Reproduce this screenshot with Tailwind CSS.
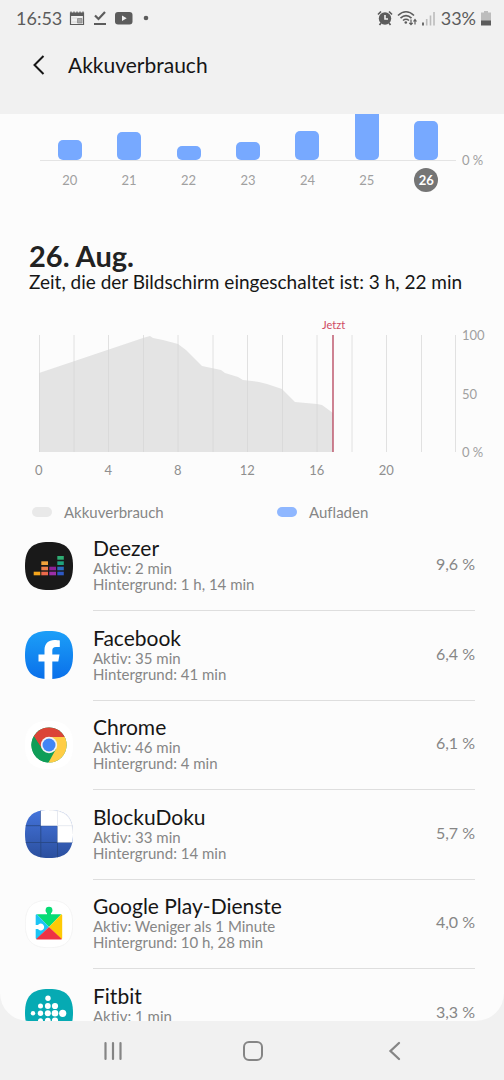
<!DOCTYPE html>
<html lang="de">
<head>
    <meta charset="UTF-8">
    <meta name="viewport" content="width=device-width, initial-scale=1.0">
    <title>Akkuverbrauch</title>
    <script src="https://cdn.jsdelivr.net/npm/@tailwindcss/browser@4"></script>
</head>
<body class="flex h-screen flex-col overflow-hidden bg-[#f1f1f1] font-[Lato,sans-serif] text-[#161616] [font-variant-ligatures:none]">

    <!-- Status bar -->
    <div class="flex h-9 shrink-0 items-center justify-between pr-3 pl-4 text-[18px] text-[#5c5c5c]">
        <div class="flex items-center gap-[7px]">
            <span>16:53</span>
            <svg class="h-4 w-4" viewBox="0 0 16 16" fill="none" stroke="#5c5c5c">
                <path d="M1.500 3h13v11.500h-13z" stroke-width="1.200"/>
                <path d="M1 4.500h14" stroke-width="3"/>
                <path d="M2 1.500v2M5 1.500v2M8 1.500v2M11 1.500v2M14 1.500v2" stroke-width="1.200"/>
                <path d="M3 8h5M3 12h5" stroke="#d8d8d8"/>
                <path d="M8.500 8.500h4.500v4.500h-4.500z" fill="#a8a8a8" stroke="#8a8a8a" stroke-width=".8"/>
            </svg>
            <svg class="h-4 w-4" viewBox="0 0 16 16" fill="none" stroke="#5c5c5c" stroke-width="2.200">
                <path d="M3 5.500l3.500 3.500L13 2M2 14h12"/>
            </svg>
            <svg class="h-4 w-[18px]" viewBox="0 0 18 16">
                <rect y="2" width="17.500" height="12.500" rx="3" fill="#5c5c5c"/>
                <path d="M7 5.500v5.500l4.700-2.750z" fill="#f1f1f1"/>
            </svg>
            <svg class="h-4 w-4" viewBox="0 0 16 16"><circle cx="6" cy="8" r="2.300" fill="#5c5c5c"/></svg>
        </div>
        <div class="flex items-center gap-1">
            <svg class="h-4 w-4" viewBox="0 0 16 16" fill="none" stroke="#5c5c5c" stroke-width="1.700">
                <circle cx="8" cy="8.500" r="6.200" fill="#5c5c5c" stroke="none"/>
                <path d="M1 4.500l3-3M15 4.500l-3-3M4 13l-1.500 2M12 13l1.500 2"/>
                <path d="M8 5v4h3" stroke="#f1f1f1" stroke-width="1.600"/>
            </svg>
            <svg class="h-4 w-5" viewBox="0 0 20 16" fill="none" stroke="#5c5c5c" stroke-width="1.600">
                <path d="M1 5.500Q9 -2 17 5.500M3.500 8.200Q9 3 14.500 8.200M6 10.500Q9 8 12 10.500"/>
                <circle cx="8.800" cy="12.500" r="1.300" fill="#5c5c5c" stroke="none"/>
                <path d="M14 9.500v5M12.300 12.800L14 14.700l1.700-1.900M18 14.500V9.800M16.500 11.500L18 9.500l1.500 2" stroke-width="1.200"/>
            </svg>
            <svg class="h-4 w-4" viewBox="0 0 16 16" stroke-width="1.600">
                <path d="M2 12.500v3" stroke="#4c4c4c"/>
                <path d="M5.700 9v6.500M9.500 5.500v10M13 2v13.500" stroke="#bcbcbc"/>
            </svg>
            <span>33%</span>
            <svg class="h-4 w-3" viewBox="0 0 12 16">
                <path d="M4 1h4v1.500h3V11H1V2.500h3z" fill="#bdbdbd"/>
                <path d="M1 10.500h10V15.500H1z" fill="#5c5c5c"/>
            </svg>
        </div>
    </div>

    <!-- App bar -->
    <header class="flex h-[78px] shrink-0 items-start gap-4 pt-[14px] pl-6">
        <button type="button" aria-label="Zurück" class="flex h-[30px] w-7 items-center justify-center">
            <svg class="h-5 w-4" viewBox="0 0 16 20" fill="none" stroke="#161616" stroke-width="2"><path d="M13.500 1L4.500 10l9 9"/></svg>
        </button>
        <h1 class="text-[21px] leading-[30px]">Akkuverbrauch</h1>
    </header>

    <main class="min-h-0 flex-1 overflow-hidden rounded-b-[28px] bg-[#fcfcfc]">

        <!-- Daily usage -->
        <section class="flex pl-10 text-[13px] text-[#a0a0a0]">
            <div class="flex-1">
                <div class="grid h-[47px] grid-cols-7 grid-rows-1 items-end justify-items-center overflow-hidden border-b border-[#e4e4e4]">
                    <div class="h-5 w-6 rounded-[5px] bg-[#77a9ff]"></div>
                    <div class="h-7 w-6 rounded-[5px] bg-[#77a9ff]"></div>
                    <div class="h-[14px] w-6 rounded-[5px] bg-[#77a9ff]"></div>
                    <div class="h-[18px] w-6 rounded-[5px] bg-[#77a9ff]"></div>
                    <div class="h-[29px] w-6 rounded-[5px] bg-[#77a9ff]"></div>
                    <div class="h-[60px] w-6 rounded-[5px] bg-[#77a9ff]"></div>
                    <div class="h-[39px] w-6 rounded-[5px] bg-[#77a9ff]"></div>
                </div>
                <div class="mt-[7px] grid grid-cols-7 justify-items-center leading-6">
                    <button type="button">20</button>
                    <button type="button">21</button>
                    <button type="button">22</button>
                    <button type="button">23</button>
                    <button type="button">24</button>
                    <button type="button">25</button>
                    <button type="button" class="h-6 w-6 rounded-full bg-[#757575] font-bold text-white">26</button>
                </div>
            </div>
            <span class="mt-[38px] w-12 pl-[6px] leading-4">0 %</span>
        </section>

        <section class="mt-12 pl-[29px]">
            <h2 class="text-[29px] leading-8 font-bold text-[#222]">26. Aug.</h2>
            <p class="text-[19px] leading-5 whitespace-nowrap">Zeit, die der Bildschirm eingeschaltet ist: 3 h, 22 min</p>
        </section>

        <!-- Battery level over the day -->
        <section class="mt-[25px] text-[13px] text-[#a0a0a0]">
            <div class="pr-[47px] pl-[39px]">
                <p class="w-[70%] pl-[283px] text-[11px] leading-4 text-[#cf4a63]">Jetzt</p>
            </div>
            <div class="mt-[2px] flex pl-[39px]">
                <svg class="h-[117px] min-w-0 flex-1" viewBox="0 0 417 117" preserveAspectRatio="none">
                    <path d="M0 38L104 3L111 1L114 3L124 5L139 9L147 15L163 31L182 35L186 38L199 42L204 45L213 46L220 47L228 49L243 54L256 67L278 69L283 70L294 78V117H0Z" fill="#e4e4e4"/>
                    <path d="M.5 0V117M35 0V117M69.500 0V117M104.500 0V117M139 0V117M174 0V117M208.500 0V117M243.500 0V117M278 0V117M313 0V117M347.500 0V117M382.500 0V117M416.500 0V117" stroke="#d6d6d6" stroke-opacity=".7"/>
                    <path d="M294 0V117" stroke="#b5415a" stroke-width="1.300"/>
                </svg>
                <div class="-my-2 flex w-12 flex-col justify-between pl-[6px] leading-4">
                    <span>100</span>
                    <span>50</span>
                    <span>0 %</span>
                </div>
            </div>
            <div class="mt-[10px] grid grid-cols-6 pr-[83px] pl-1 text-center leading-4 text-[#8f8f8f]">
                <span>0</span>
                <span>4</span>
                <span>8</span>
                <span>12</span>
                <span>16</span>
                <span>20</span>
            </div>
            <div class="mt-6 grid grid-cols-2 gap-[18px] pl-8 text-[15px] leading-5 text-[#868686]">
                <span class="flex items-center gap-3"><i class="h-[10px] w-5 rounded-full bg-[#e9e9e9]"></i>Akkuverbrauch</span>
                <span class="flex items-center gap-3"><i class="h-[10px] w-5 rounded-full bg-[#8fb7ff]"></i>Aufladen</span>
            </div>
        </section>

        <!-- Usage per app -->
        <ul>
            <li class="flex min-h-[89px] gap-5 pr-[29px] pl-[25px] even:min-h-[90px]">
                <svg class="mt-5 h-12 w-12" viewBox="0 0 48 48">
                    <path d="M24 0C41 0 48 7 48 24S41 48 24 48 0 41 0 24 7 0 24 0Z" fill="#191919"/>
                    <path d="M8.700 29.700h6.600v3.600H8.700z" fill="#f5a51c"/>
                    <path d="M16.300 19.300H23V23h-6.700z" fill="#f2a33a"/>
                    <path d="M16.300 24.700H23v3.600h-6.700z" fill="#ee7f49"/>
                    <path d="M16.300 29.700H23v3.600h-6.700z" fill="#ec6a4c"/>
                    <path d="M24.300 24.700H31v3.600h-6.700z" fill="#8a2196"/>
                    <path d="M24.300 29.700H31v3.600h-6.700z" fill="#9b2fa8"/>
                    <path d="M32.300 14h6.500v3.700h-6.500z" fill="#2fae74"/>
                    <path d="M32.300 19.300h6.500V23h-6.500z" fill="#1fa37e"/>
                    <path d="M32.300 24.700h6.500v3.600h-6.500z" fill="#2c6cc0"/>
                    <path d="M32.300 29.700h6.500v3.600h-6.500z" fill="#2d58c4"/>
                </svg>
                <div class="flex flex-1 items-center justify-between border-b border-[#dedede] pb-1">
                    <div class="text-[15px] leading-4 text-[#868686]">
                        <h3 class="text-[21px] leading-6 text-[#161616]">Deezer</h3>
                        <p>Aktiv: 2 min</p>
                        <p>Hintergrund: 1 h, 14 min</p>
                    </div>
                    <span class="text-[16px] text-[#868686]">9,6 %</span>
                </div>
            </li>
            <li class="flex min-h-[89px] gap-5 pr-[29px] pl-[25px] even:min-h-[90px]">
                <svg class="mt-5 h-12 w-12" viewBox="0 0 48 48">
                    <defs>
                        <linearGradient id="fb" x2="0" y2="1"><stop stop-color="#1c9ff8"/><stop offset="1" stop-color="#0a70ea"/></linearGradient>
                    </defs>
                    <path d="M24 0C41 0 48 7 48 24S41 48 24 48 0 41 0 24 7 0 24 0Z" fill="url(#fb)"/>
                    <path d="M19.500 48V30.500h-6v-7h6V19c0-6.500 4-10 10-10 2 0 4 .2 5.300.5V16H31c-2.700 0-3.700 1.300-3.700 3.500v4h7.200l-1.200 7h-6V48z" fill="#fff"/>
                </svg>
                <div class="flex flex-1 items-center justify-between border-b border-[#dedede] pb-1">
                    <div class="text-[15px] leading-4 text-[#868686]">
                        <h3 class="text-[21px] leading-6 text-[#161616]">Facebook</h3>
                        <p>Aktiv: 35 min</p>
                        <p>Hintergrund: 41 min</p>
                    </div>
                    <span class="text-[16px] text-[#868686]">6,4 %</span>
                </div>
            </li>
            <li class="flex min-h-[89px] gap-5 pr-[29px] pl-[25px] even:min-h-[90px]">
                <svg class="mt-5 h-12 w-12" viewBox="0 0 48 48">
                    <path d="M24 0C41 0 48 7 48 24S41 48 24 48 0 41 0 24 7 0 24 0Z" fill="#fff"/>
                    <circle cx="24" cy="24" r="17.600" fill="#0f9d58"/>
                    <path d="M24 16H39.700A17.600 17.600 0 0 1 23.500 41.600L31 28z" fill="#ffcd46"/>
                    <path d="M8.800 15.200A17.600 17.600 0 0 1 39.700 16H24L17 28z" fill="#db4437"/>
                    <path d="M8.800 15.200L17 28l7 4 -1 9.600A17.600 17.600 0 0 1 8.800 15.200z" fill="#0f9d58"/>
                    <circle cx="24" cy="24" r="8.200" fill="#f4f4f4"/>
                    <circle cx="24" cy="24" r="6.500" fill="#4285f4"/>
                </svg>
                <div class="flex flex-1 items-center justify-between border-b border-[#dedede] pb-1">
                    <div class="text-[15px] leading-4 text-[#868686]">
                        <h3 class="text-[21px] leading-6 text-[#161616]">Chrome</h3>
                        <p>Aktiv: 46 min</p>
                        <p>Hintergrund: 4 min</p>
                    </div>
                    <span class="text-[16px] text-[#868686]">6,1 %</span>
                </div>
            </li>
            <li class="flex min-h-[89px] gap-5 pr-[29px] pl-[25px] even:min-h-[90px]">
                <svg class="mt-5 h-12 w-12" viewBox="0 0 48 48">
                    <defs>
                        <linearGradient id="bd" x2="0" y2="1"><stop stop-color="#4474dc"/><stop offset="1" stop-color="#2b4f9e"/></linearGradient>
                        <clipPath id="sq"><path d="M24 0C41 0 48 7 48 24S41 48 24 48 0 41 0 24 7 0 24 0Z"/></clipPath>
                    </defs>
                    <g clip-path="url(#sq)">
                        <path d="M0 0h48v48H0z" fill="url(#bd)"/>
                        <path d="M15.800 0v48M0 15.700h32.500M32.500 15.700V48M0 32.500h48" fill="none" stroke="#274680" stroke-width=".8"/>
                        <path d="M15.800 0H48v32.500H32.500V15.700H15.800z" fill="#fff"/>
                        <path d="M32.500 0v15.700H48" fill="none" stroke="#dfe3ec" stroke-width=".8"/>
                    </g>
                    <path d="M24 .3C40.800.3 47.700 7.200 47.700 24" fill="none" stroke="#ececec" stroke-width=".6"/>
                </svg>
                <div class="flex flex-1 items-center justify-between border-b border-[#dedede] pb-1">
                    <div class="text-[15px] leading-4 text-[#868686]">
                        <h3 class="text-[21px] leading-6 text-[#161616]">BlockuDoku</h3>
                        <p>Aktiv: 33 min</p>
                        <p>Hintergrund: 14 min</p>
                    </div>
                    <span class="text-[16px] text-[#868686]">5,7 %</span>
                </div>
            </li>
            <li class="flex min-h-[89px] gap-5 pr-[29px] pl-[25px] even:min-h-[90px]">
                <svg class="mt-5 h-12 w-12" viewBox="0 0 48 48">
                    <path d="M24 .3C40.800.3 47.700 7.200 47.700 24S40.800 47.700 24 47.700.3 40.800.3 24 7.200.3 24 .3Z" fill="#fff" stroke="#efefef" stroke-width=".6"/>
                    <path d="M11.700 14.300L24 27 36.300 14.300z" fill="#06dc74"/>
                    <circle cx="24" cy="10.200" r="3.400" fill="#06dc74"/>
                    <path d="M22 12h4v3h-4z" fill="#06dc74"/>
                    <path d="M11.700 14.300Q10.700 14.300 10.700 15.500V38.300L11.500 39.200 24 27z" fill="#1cc4f5"/>
                    <path d="M36.300 14.300Q37.200 14.500 37.200 15.500V38.300L36.300 39.200 24 27z" fill="#ffca05"/>
                    <path d="M11.200 39Q11.500 39.500 12.500 39.500H35.500Q36.500 39.500 36.800 39L24 27z" fill="#ee3344"/>
                    <path d="M10 25h3a3.400 3.400 0 1 1 0 4h-3z" fill="#fff"/>
                </svg>
                <div class="flex flex-1 items-center justify-between border-b border-[#dedede] pb-1">
                    <div class="text-[15px] leading-4 text-[#868686]">
                        <h3 class="text-[21px] leading-6 text-[#161616]">Google Play-Dienste</h3>
                        <p>Aktiv: Weniger als 1 Minute</p>
                        <p>Hintergrund: 10 h, 28 min</p>
                    </div>
                    <span class="text-[16px] text-[#868686]">4,0 %</span>
                </div>
            </li>
            <li class="flex min-h-[89px] gap-5 pr-[29px] pl-[25px] even:min-h-[90px]">
                <svg class="mt-5 h-12 w-12" viewBox="0 0 48 48">
                    <path d="M24 0C41 0 48 7 48 24S41 48 24 48 0 41 0 24 7 0 24 0Z" fill="#06aab3"/>
                    <g fill="#fff">
                        <circle cx="23" cy="9.300" r="2.700"/>
                        <circle cx="15.500" cy="17" r="2.500"/><circle cx="22.800" cy="17" r="2.900"/><circle cx="30" cy="17" r="3.100"/>
                        <circle cx="8" cy="24.300" r="2.200"/><circle cx="15.500" cy="24.300" r="2.700"/><circle cx="22.800" cy="24.300" r="3"/><circle cx="30" cy="24.300" r="3.300"/><circle cx="37.700" cy="24.300" r="3.600"/>
                        <circle cx="15.500" cy="31.700" r="2.500"/><circle cx="22.800" cy="31.700" r="2.900"/><circle cx="30" cy="31.700" r="3.100"/>
                        <circle cx="23" cy="39" r="2.700"/>
                    </g>
                </svg>
                <div class="flex flex-1 items-center justify-between border-b border-[#dedede] pb-1">
                    <div class="text-[15px] leading-4 text-[#868686]">
                        <h3 class="text-[21px] leading-6 text-[#161616]">Fitbit</h3>
                        <p>Aktiv: 1 min</p>
                        <p>&nbsp;</p>
                    </div>
                    <span class="text-[16px] text-[#868686]">3,3 %</span>
                </div>
            </li>
        </ul>
    </main>

    <!-- Navigation bar -->
    <nav class="grid h-[59px] shrink-0 grid-cols-3 items-center pr-10 pl-[43px]">
        <button type="button" aria-label="Letzte Apps" class="flex justify-center">
            <svg class="h-5 w-5" viewBox="0 0 20 20" stroke="#858585" stroke-width="2.200" stroke-linecap="round"><path d="M2.500 2v16M10 2v16M17.500 2v16"/></svg>
        </button>
        <button type="button" aria-label="Startbildschirm" class="flex justify-center">
            <svg class="h-5 w-5" viewBox="0 0 20 20" fill="none" stroke="#858585" stroke-width="2"><rect x="1" y="1" width="18" height="18" rx="5"/></svg>
        </button>
        <button type="button" aria-label="Zurück" class="flex justify-center">
            <svg class="h-5 w-5" viewBox="0 0 20 20" fill="none" stroke="#858585" stroke-width="2.300" stroke-linecap="round"><path d="M15 2L6.500 10l8.500 8"/></svg>
        </button>
    </nav>
</body>
</html>
